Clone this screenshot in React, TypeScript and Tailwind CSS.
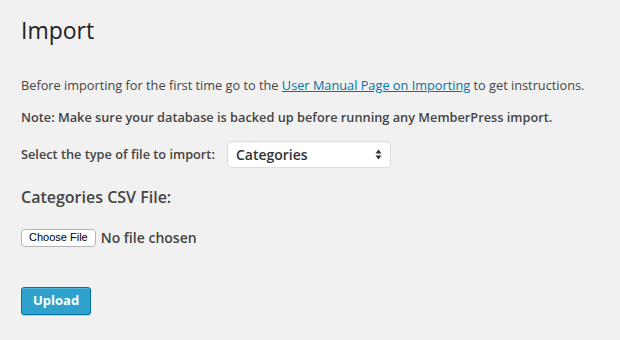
export default function App() {
  return (
    <div
      className="w-[620px] h-[340px] bg-[#f1f1f1] text-[#444] pl-[21px] overflow-hidden"
      style={{ fontFamily: '"Open Sans", sans-serif' }}
    >
      <h2 className="pt-[16px] text-[23px] leading-[29px] text-[#222] font-normal">Import</h2>

      <p className="mt-[30px] text-[12.75px] leading-[20px]">
        Before importing for the first time go to the{" "}
        <a href="#" className="text-[#0074a2] underline">
          User Manual Page on Importing
        </a>{" "}
        to get instructions.
      </p>
      <p className="mt-[12px] text-[12.75px] leading-[20px] font-semibold">
        Note: Make sure your database is backed up before running any MemberPress import.
      </p>

      <div className="mt-[14px] flex items-center gap-[12px]">
        <span className="text-[12.75px] font-semibold">Select the type of file to import:</span>
        <div className="w-[164px] h-[27px] bg-white border border-[#ddd] rounded-[4px] flex items-center justify-between pl-[8px] pr-[8px] shadow-[inset_0_1px_2px_rgba(0,0,0,0.05)]">
          <span className="text-[14px] font-semibold text-[#333]">Categories</span>
          <svg width="7" height="11" viewBox="0 0 7 11">
            <path d="M3.5 0.5 L6.5 4.5 L0.5 4.5 Z" fill="#333" />
            <path d="M3.5 10.5 L6.5 6.5 L0.5 6.5 Z" fill="#333" />
          </svg>
        </div>
      </div>

      <h3 className="mt-[17px] text-[16px] leading-[24px] font-semibold">Categories CSV File:</h3>

      <div className="mt-[18px] flex items-center gap-[5px]">
        <button
          className="h-[18px] px-[7px] bg-white border border-[#b5b5b5] rounded-[4px] text-[11px] leading-none text-black"
          style={{ fontFamily: '"Liberation Sans", Arial, sans-serif' }}
        >
          Choose File
        </button>
        <span className="text-[14px] font-semibold">No file chosen</span>
      </div>

      <button className="mt-[39px] h-[28px] px-[11px] bg-[#2ea2cc] border border-[#0074a2] rounded-[3px] text-white text-[13px] font-bold shadow-[0_1px_0_rgba(120,200,230,0.5)_inset,0_1px_0_rgba(0,0,0,0.15)]">
        Upload
      </button>
    </div>
  );
}
